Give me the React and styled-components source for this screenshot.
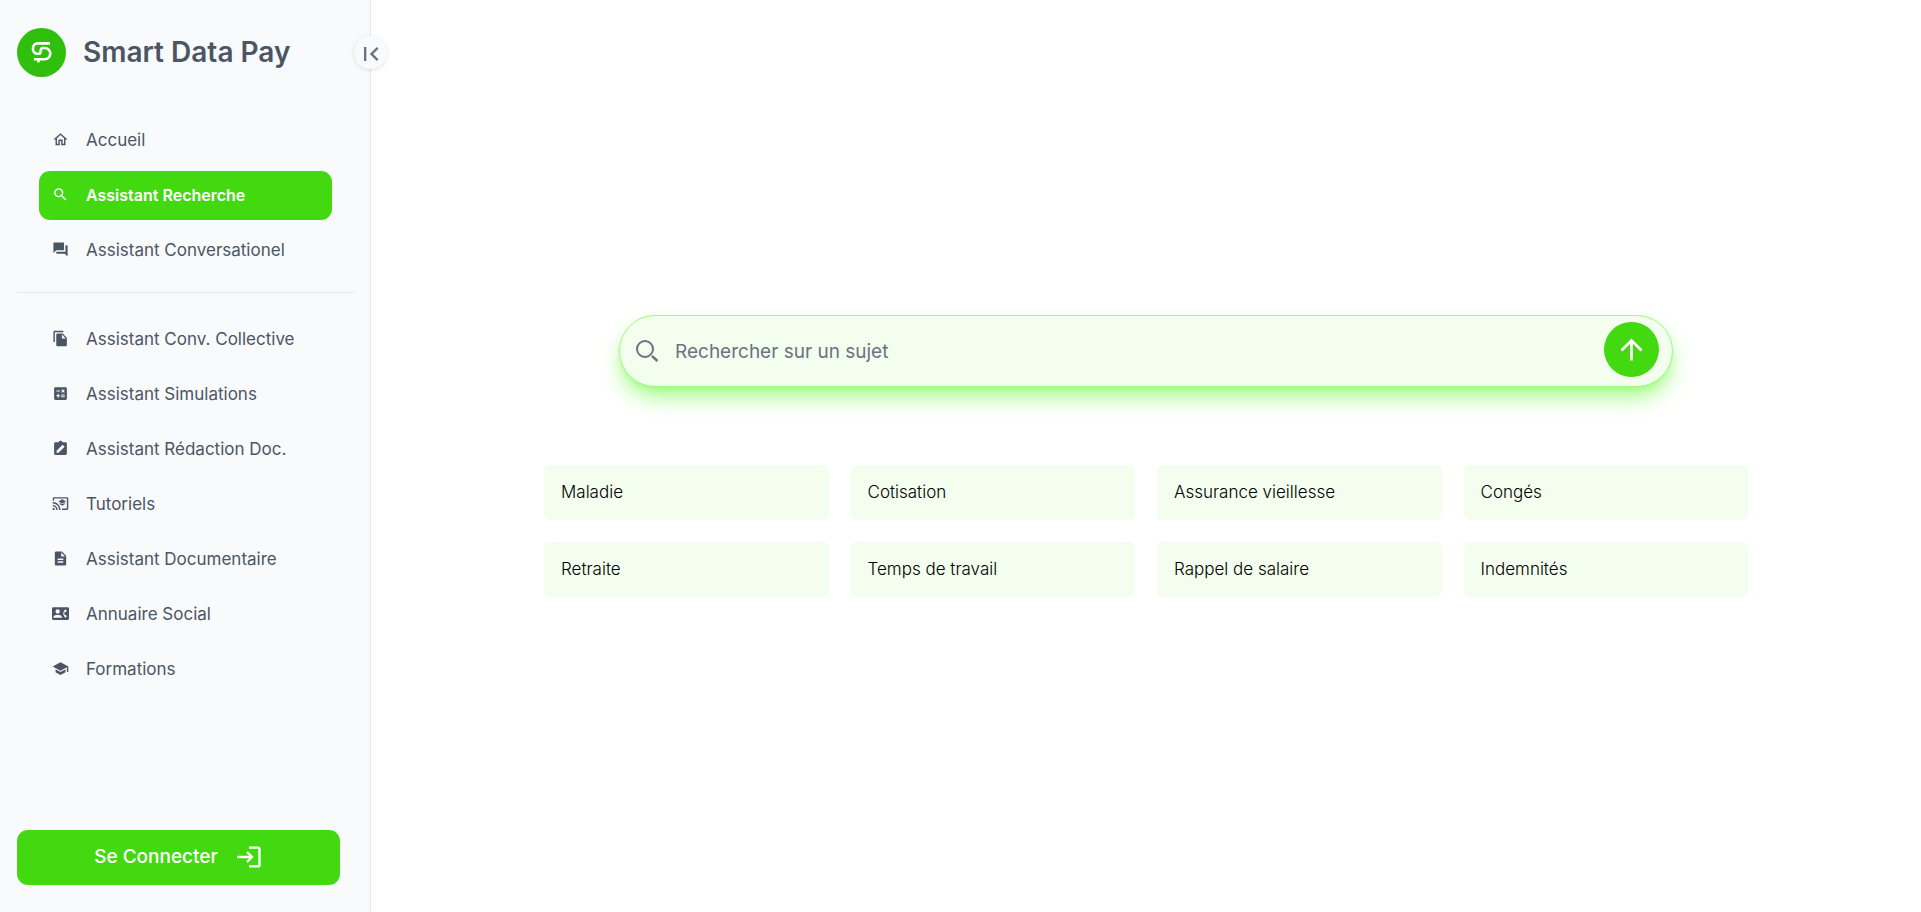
import React from 'react';
import styled, { createGlobalStyle } from 'styled-components';
import {
    MdOutlineHome,
    MdSearch,
    MdQuestionAnswer,
    MdFileCopy,
    MdCalculate,
    MdOutlineCastForEducation,
    MdDescription,
    MdContactPhone,
    MdSchool,
    MdFirstPage,
    MdLogin,
    MdArrowUpward,
} from 'react-icons/md';

const colors = {
    primary: '#43d911',
    logo: '#30bf0d',
    light: '#f3feee',
    outline: '#9dfb7e',
    sidebar: '#f9fafc',
    border: '#e5e7eb',
    text: '#4b5563',
    grey: '#6b7280',
};

const ClipboardEdit = () => (
    <svg viewBox="0 0 24 24" width="1em" height="1em" fill="currentColor" aria-hidden="true">
        <path d="M19 3h-4.2a3 3 0 0 0-5.6 0H5a2 2 0 0 0-2 2v14a2 2 0 0 0 2 2h14a2 2 0 0 0 2-2V5a2 2 0 0 0-2-2zM9.2 18H6.4v-2.800l8.600-8.600 2.800 2.800z" />
    </svg>
);

const Logo = () => (
    <svg viewBox="0 0 49 49" width="49" height="49" aria-hidden="true">
        <circle cx="24.5" cy="24.5" r="24.5" fill={colors.logo} />
        <g fill="none" stroke="#fff" strokeWidth="2.6">
            <path d="M33 15.4H20.5a4.6 5.2 0 0 0 0 10.4h1q1.8 0 2-2l.3-1.8q.3-2 2.2-2h1.7a5.6 5.6 0 0 1 0 11.2H17" />
            <path d="M21.5 31v3.4" />
        </g>
    </svg>
);

const mainLinks = [
    { label: 'Accueil', icon: <MdOutlineHome /> },
    { label: 'Assistant Recherche', icon: <MdSearch />, active: true },
    { label: 'Assistant Conversationel', icon: <MdQuestionAnswer /> },
];

const toolLinks = [
    { label: 'Assistant Conv. Collective', icon: <MdFileCopy /> },
    { label: 'Assistant Simulations', icon: <MdCalculate /> },
    { label: 'Assistant Rédaction Doc.', icon: <ClipboardEdit /> },
    { label: 'Tutoriels', icon: <MdOutlineCastForEducation /> },
    { label: 'Assistant Documentaire', icon: <MdDescription /> },
    { label: 'Annuaire Social', icon: <MdContactPhone /> },
    { label: 'Formations', icon: <MdSchool /> },
];

const topics = [
    'Maladie',
    'Cotisation',
    'Assurance vieillesse',
    'Congés',
    'Retraite',
    'Temps de travail',
    'Rappel de salaire',
    'Indemnités',
];

const NavList = ({ links }) => (
    <StyledNav>
        {links.map(({ label, icon, active }) => (
            <StyledLink key={label} href="#" $active={active} aria-current={active ? 'page' : undefined}>
                {icon}
                {label}
            </StyledLink>
        ))}
    </StyledNav>
);

const App = () => {
    return (
        <StyledLayout>
            <GlobalStyle />
            <StyledSidebar>
                <StyledBrand>
                    <Logo />
                    <StyledTitle>Smart Data Pay</StyledTitle>
                </StyledBrand>
                <StyledToggle type="button" aria-label="Réduire le menu">
                    <MdFirstPage />
                </StyledToggle>
                <NavList links={mainLinks} />
                <StyledDivider />
                <NavList links={toolLinks} />
                <StyledLogin type="button">
                    Se Connecter
                    <MdLogin />
                </StyledLogin>
            </StyledSidebar>
            <StyledMain>
                <StyledSearch onSubmit={(e) => e.preventDefault()}>
                    <svg viewBox="0 0 24 24" width="24" height="24" fill="none" stroke={colors.grey} strokeWidth="2" aria-hidden="true">
                        <circle cx="10" cy="10" r="8" />
                        <path d="M17 17l5.5 5" strokeWidth="2.4" />
                    </svg>
                    <StyledInput type="text" placeholder="Rechercher sur un sujet" aria-label="Rechercher sur un sujet" />
                    <StyledSubmit type="submit" aria-label="Rechercher">
                        <MdArrowUpward />
                    </StyledSubmit>
                </StyledSearch>
                <StyledTopics>
                    {topics.map((topic) => (
                        <StyledTopic key={topic} type="button">{topic}</StyledTopic>
                    ))}
                </StyledTopics>
            </StyledMain>
        </StyledLayout>
    );
}

const GlobalStyle = createGlobalStyle`
    * {
        box-sizing: border-box;
    }

    body {
        margin: 0;
        background-color: #fff;
    }

    body, button, input {
        font-family: Inter, 'Liberation Sans', sans-serif;
    }

    svg {
        flex-shrink: 0;
    }
`;

const StyledLayout = styled.div`
    display: flex;
    min-height: 100vh;
`;

const StyledSidebar = styled.aside`
    position: relative;
    display: flex;
    flex-direction: column;
    flex-shrink: 0;
    width: 371px;
    padding: 28px 16px 27px 17px;
    background-color: ${colors.sidebar};
    border-right: 1px solid ${colors.border};
`;

const StyledBrand = styled.div`
    display: flex;
    align-items: center;
    gap: 17px;
    margin-bottom: 39px;
`;

const StyledTitle = styled.h1`
    margin: 0;
    padding-bottom: 2px;
    font-size: 28px;
    line-height: 36px;
    font-weight: 600;
    color: ${colors.text};
`;

const StyledToggle = styled.button`
    position: absolute;
    top: 36px;
    right: -17px;
    display: flex;
    align-items: center;
    justify-content: center;
    width: 33px;
    height: 33px;
    padding: 2px 0 0;
    border: none;
    border-radius: 50%;
    background-color: ${colors.sidebar};
    box-shadow: 0 1px 4px rgba(0, 0, 0, 0.12);
    color: ${colors.grey};
    font-size: 28px;
`;

const StyledNav = styled.nav`
    display: flex;
    flex-direction: column;
    gap: 6px;
    padding: 0 22px;
`;

const StyledLink = styled.a`
    display: flex;
    align-items: center;
    gap: 17px;
    height: 49px;
    padding: 0 13px 2px;
    border-radius: 11px;
    background-color: ${({ $active }) => ($active ? colors.primary : 'transparent')};
    color: ${({ $active }) => ($active ? '#fff' : colors.text)};
    font-size: ${({ $active }) => ($active ? 16 : 17)}px;
    font-weight: ${({ $active }) => ($active ? 600 : 400)};
    text-decoration: none;
    white-space: nowrap;

    svg {
        font-size: 17px;
    }
`;

const StyledDivider = styled.hr`
    width: 100%;
    margin: 17px 0 22px;
    border: none;
    border-top: 1px solid ${colors.border};
`;

const StyledLogin = styled.button`
    display: flex;
    align-items: center;
    justify-content: center;
    gap: 17px;
    height: 55px;
    margin: auto 14px 0 0;
    padding: 0 0 2px;
    border: none;
    border-radius: 11px;
    background-color: ${colors.primary};
    color: #fff;
    font-size: 19px;
    font-weight: 500;

    svg {
        font-size: 28px;
    }
`;

const StyledMain = styled.main`
    display: flex;
    flex: 1;
    flex-direction: column;
    align-items: center;
    justify-content: center;
    gap: 78px;
    padding: 0 32px;
`;

const StyledSearch = styled.form`
    display: flex;
    align-items: center;
    gap: 16px;
    width: 100%;
    max-width: 1054px;
    height: 72px;
    padding: 0 13px 0 15px;
    border: 1px solid ${colors.outline};
    border-radius: 36px;
    background-color: ${colors.light};
    box-shadow: 0 12px 22px -3px ${colors.outline}, 0 4px 7px -4px ${colors.outline};
`;

const StyledInput = styled.input`
    flex: 1;
    min-width: 0;
    padding: 0;
    border: none;
    outline: none;
    background: transparent;
    color: ${colors.text};
    font-size: 19px;

    &::placeholder {
        color: ${colors.grey};
        opacity: 1;
    }
`;

const StyledSubmit = styled.button`
    display: flex;
    align-items: center;
    justify-content: center;
    width: 55px;
    height: 55px;
    margin-bottom: 3px;
    padding: 0;
    border: none;
    border-radius: 50%;
    background-color: ${colors.primary};
    color: #fff;
    font-size: 33px;
`;

const StyledTopics = styled.div`
    display: grid;
    grid-template-columns: repeat(4, 1fr);
    gap: 22px;
    width: 100%;
    max-width: 1204px;
`;

const StyledTopic = styled.button`
    height: 55px;
    padding: 0 17px 1px;
    border: none;
    border-radius: 6px;
    background-color: ${colors.light};
    color: #000;
    font-size: 17px;
    font-weight: 300;
    text-align: left;
`;

export default App;
